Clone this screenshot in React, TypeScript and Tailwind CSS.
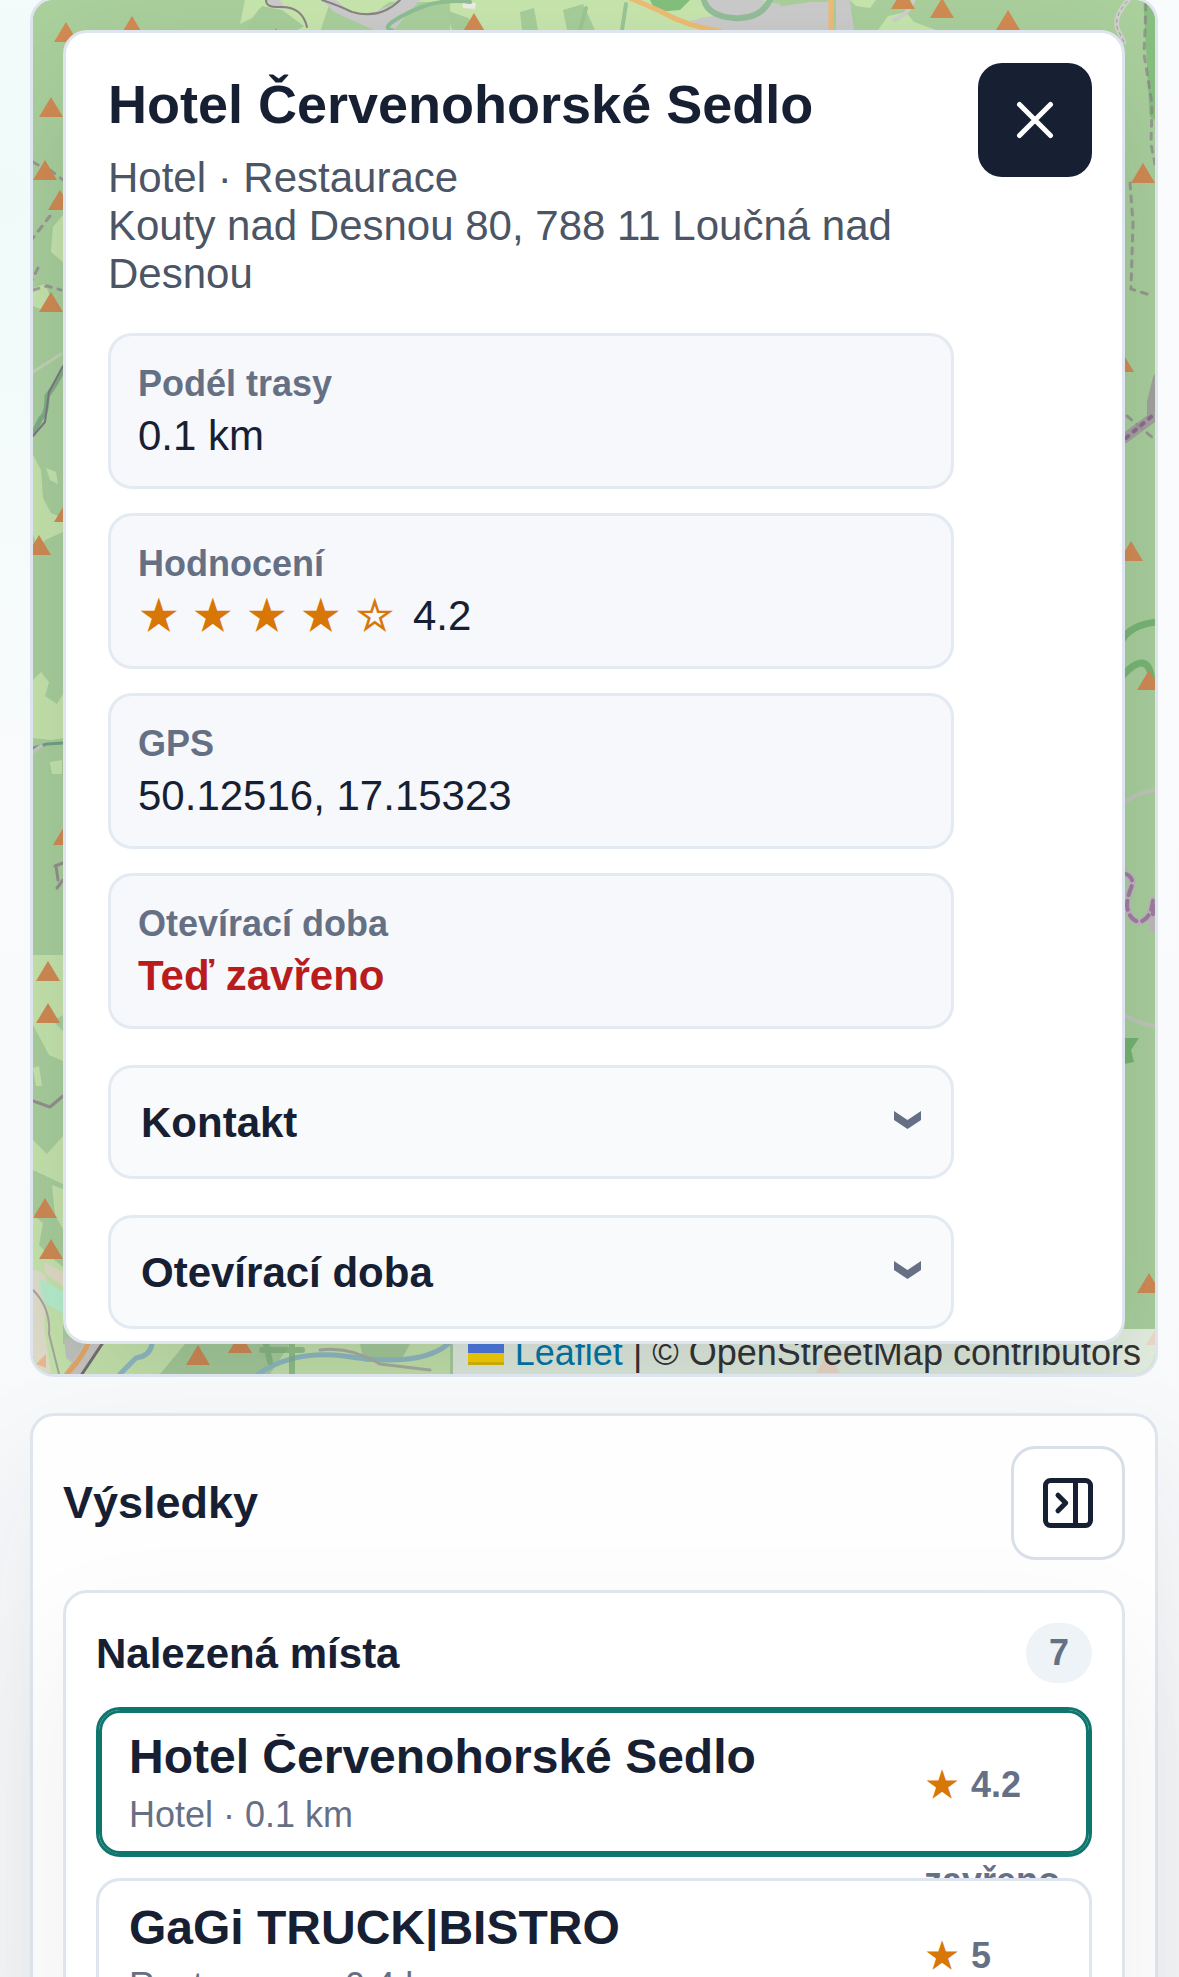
import { useState, type ReactNode } from "react";

type Place = {
  id: string;
  name: string;
  meta: string;
  rating: string;
  note?: string;
};

const PLACES: Place[] = [
  { id: "sedlo", name: "Hotel Červenohorské Sedlo", meta: "Hotel · 0.1 km", rating: "4.2", note: "zavřeno" },
  { id: "gagi", name: "GaGi TRUCK|BISTRO", meta: "Restaurace · 0.4 km", rating: "5" },
];

const STARS = ["★", "★", "★", "★", "☆"];

// peak markers, [x, base y]
const PEAKS = [
  [66, 42], [132, 36], [276, 48], [474, 33], [51, 117], [45, 180], [60, 210], [51, 312],
  [66, 522], [39, 555], [65, 845], [48, 981], [48, 1023], [45, 1218], [51, 1259],
  [198, 1365], [240, 1353], [828, 1373], [903, 9], [942, 18], [1008, 30], [1143, 183],
  [1122, 372], [1131, 561], [1149, 690], [1149, 1293], [1158, 1345],
];

export default function App() {
  const [selected, setSelected] = useState("sedlo");
  const [detailOpen, setDetailOpen] = useState(true);
  const [listOpen, setListOpen] = useState(true);

  return (
    <div className="h-screen overflow-hidden bg-[linear-gradient(180deg,#f9fcfd_0%,#f9fafc_50%,#f7f8fa_100%)] font-['Liberation_Sans',sans-serif] text-[#172033]">
      <main className="-mt-[3px] flex flex-col gap-9 bg-[radial-gradient(circle_at_0px_200px,#f0fbf9_0px,transparent_600px)] pr-[21px] pl-[30px]">
        <section className="relative overflow-hidden rounded-3xl border-3 border-[#dde4ed] bg-[#a3c595]">
          <MapTiles />
          <div className="absolute right-0 bottom-0 flex h-[45px] items-center gap-[10px] bg-white/70 pt-[2px] pr-[14px] pl-[15px] text-[36px] leading-[42px] text-[#333]">
            <a href="#leaflet" className="flex items-center gap-[11px] text-[#0078a8]">
              <svg width="36" height="24" viewBox="0 0 12 8" aria-hidden="true">
                <path fill="#4C7BE1" d="M0 0h12v4H0z" />
                <path fill="#FFD500" d="M0 4h12v3H0z" />
                <path fill="#E0BC00" d="M0 7h12v1H0z" />
              </svg>
              Leaflet
            </a>
            <span>| © OpenStreetMap contributors</span>
          </div>

          <div className="relative p-[30px]">
            {detailOpen && <PlaceDetail onClose={() => setDetailOpen(false)} />}
          </div>
        </section>

        <section className="rounded-3xl border-3 border-[#dfe5ed] bg-white/90 p-[30px] shadow-[0_54px_135px_rgba(23,32,51,0.08)]">
          <div className="mb-[30px] flex items-center justify-between">
            <h2 className="text-[45px] leading-[54px] font-bold">Výsledky</h2>
            <button
              aria-label="Skrýt výsledky"
              onClick={() => setListOpen((v) => !v)}
              className="flex size-[114px] items-center justify-center rounded-3xl border-3 border-[#d8dfe9] bg-white"
            >
              <svg width="54" height="54" viewBox="0 0 54 54" fill="none" stroke="#172033" strokeWidth="5">
                <rect x="4.500" y="4.500" width="45" height="45" rx="5" />
                <path d="M34.500 4.500v45" />
                <path d="M17 19.250l7.750 7.750-7.750 7.750" strokeLinecap="round" strokeLinejoin="round" />
              </svg>
            </button>
          </div>

          {listOpen && (
            <div className="rounded-3xl border-3 border-[#dfe5ed] bg-white p-[30px] shadow-[0_54px_135px_rgba(23,32,51,0.06)]">
              <div className="mb-6 flex items-center justify-between">
                <h3 className="pt-[2px] text-[42px] leading-[48px] font-bold">Nalezená místa</h3>
                <span className="flex h-[60px] w-[66px] items-center justify-center rounded-full bg-[#eef3f7] text-[36px] leading-[42px] font-bold text-[#667085]">
                  7
                </span>
              </div>
              <div className="flex flex-col gap-[21px]">
                {PLACES.map((place) => (
                  <PlaceRow
                    key={place.id}
                    place={place}
                    active={place.id === selected}
                    onSelect={() => setSelected(place.id)}
                  />
                ))}
              </div>
            </div>
          )}
        </section>
      </main>
    </div>
  );
}

function PlaceDetail({ onClose }: { onClose: () => void }) {
  return (
    <article className="flex items-start justify-between gap-6 rounded-3xl border-3 border-[#dfe5ee] bg-white pt-[30px] pr-[30px] pb-3 pl-[42px] shadow-[0_54px_135px_rgba(23,32,51,0.16)]">
      <div className="min-w-0 flex-1">
        <h1 className="mt-2 text-[54px] leading-[66px] font-bold">Hotel Červenohorské Sedlo</h1>
        <p className="mt-[17px] text-[42px] leading-[48px] text-[#4b5565]">
          Hotel · Restaurace
          <br />
          Kouty nad Desnou 80, 788 11 Loučná nad Desnou
        </p>
        <dl className="mt-[35px] flex flex-col gap-6">
          <Fact label="Podél trasy">0.1 km</Fact>
          <Fact label="Hodnocení">
            <span className="flex gap-[17px]">
              <span className="flex gap-3 font-bold text-[#d97706]">
                {STARS.map((star, i) => (
                  <span key={i} className="w-[42px] text-center">
                    {star}
                  </span>
                ))}
              </span>
              4.2
            </span>
          </Fact>
          <Fact label="GPS">50.12516, 17.15323</Fact>
          <Fact label="Otevírací doba">
            <strong className="text-[#b91c1c]">Teď zavřeno</strong>
          </Fact>
        </dl>
        <div className="mt-9 flex flex-col gap-9">
          <Toggle title="Kontakt" />
          <Toggle title="Otevírací doba" />
        </div>
      </div>
      <button
        aria-label="Zavřít"
        onClick={onClose}
        className="flex size-[114px] shrink-0 items-center justify-center rounded-3xl bg-[#172033]"
      >
        <svg width="54" height="54" viewBox="0 0 54 54" fill="none" stroke="#fff" strokeWidth="5" strokeLinecap="round">
          <path d="M11.500 11.500l31 31M42.500 11.500l-31 31" />
        </svg>
      </button>
    </article>
  );
}

function Fact({ label, children }: { label: string; children: ReactNode }) {
  return (
    <div className="rounded-3xl border-3 border-[#e4eaf1] bg-[#f6f8fc] p-[27px]">
      <dt className="text-[36px] leading-[42px] font-bold text-[#667085]">{label}</dt>
      <dd className="mt-[6px] h-12 text-[42px] leading-[50px]">{children}</dd>
    </div>
  );
}

function Toggle({ title }: { title: string }) {
  return (
    <button className="flex w-full items-center justify-between rounded-3xl border-3 border-[#e4eaf1] bg-[#f9fafc] px-[30px] pt-[31px] pb-[29px] text-left text-[42px] leading-[48px] font-bold">
      {title}
      <svg width="27" height="24" viewBox="0 0 27 24" fill="#667085" aria-hidden="true">
        <path d="M0 0l13.500 9L27 0v9L13.500 18 0 9z" />
      </svg>
    </button>
  );
}

function PlaceRow({ place, active, onSelect }: { place: Place; active: boolean; onSelect: () => void }) {
  return (
    <button
      onClick={onSelect}
      className={
        "relative flex h-[150px] items-start justify-between rounded-3xl border-3 bg-white px-[30px] pt-6 text-left " +
        (active ? "border-[#0f766e] shadow-[inset_0_0_0_3px_#0f766e]" : "border-[#dfe5ee]")
      }
    >
      <span className="min-w-0 flex-1">
        <span className="block truncate text-[48px] leading-[46px] font-bold">{place.name}</span>
        <span className="mt-[14px] block truncate text-[36px] leading-[42px] text-[#667085]">{place.meta}</span>
      </span>
      <span className="flex w-[135px] shrink-0 flex-col gap-12 pt-[27px] text-[36px] leading-[48px] font-bold text-[#667085]">
        <span className="flex h-12 gap-[11px]">
          <span className="w-9 text-center text-[#d97706]">★</span>
          {place.rating}
        </span>
        {place.note && <span>{place.note}</span>}
      </span>
    </button>
  );
}

function MapTiles() {
  return (
    <svg
      className="absolute inset-0 size-full"
      viewBox="33 0 1122 1374"
      preserveAspectRatio="xMidYMin slice"
      fill="none"
      strokeLinecap="round"
      strokeLinejoin="round"
      aria-hidden="true"
    >
      <rect x="33" width="1122" height="1374" fill="#abd19d" />

      {/* meadows */}
      <g fill="#c8e7ad">
        <path d="M255 0h-10l-5 24 12-6 8-10 10 0-4 22h8l4-14 12 4 8 12h22l10-30h120v30h320V0z" />
        <path d="M850 0h26l-6 8-14-2zM878 30l10-14 18-4 8 10 22 8z" />
        <path d="M63 215l-10 12-2 25 12 10zM33 288l12-4 5 12-3 16-14-6z" />
        <path d="M33 455l8 15 2 28 8 15 12 5v14l-18 8-6 12-6-18zM46 468l10 4 2 12-8-4zM33 680l8-8 8 10-4 14 12 8 6-10v44l-12 2-18-2zM50 762l12-2v14l-10 0z" />
        <path d="M33 955h30v60l-10 6 10 10v30l-14-6-16-30zM33 1068l6-2 3 20-6 0zM33 1140l14 14 16-18v48l-30-14zM52 1185l11 4v40l-8-14zM33 1215l10 8-4 22 12 12 12 10v107H33z" />
        <path d="M63 1344h135l-20 30H63zM290 1344h160v30H270z" />
      </g>
      <g fill="#a8cf9a">
        <path d="M262 6l20 4 22 16-6 4h-52zM446 10l22 8 12 12h-28zM520 12l14-4 4 22h-16zM563 10l20-6 12 26h-28zM826 10l24-4 8 14-16 12z" />
        <path d="M185 1344h90l-10 30H160zM360 1344h50l-10 18h-36z" />
      </g>
      <path d="M586 8l-6 22M626 4l-4 26" stroke="#9cc795" strokeWidth="4" />

      {/* built-up areas */}
      <g fill="#cccccc">
        <path d="M266 0h14l4 6 10 4-20-2zM322 0h16l24 14 28-8 8-6h22l-14 16-12 14h-20l-40-18zM708 0h52l20 4 2 12-30 4-44-8zM700 18l110-16 20 0 2 28H704l-12-8zM836 0h14l4 30h-18z" />
        <path d="M690 20h110v10h-96z" />
        <path d="M64 1338l24 4-14 22-8-6z" fill="#c3c6bf" />
      </g>
      <path d="M336 0h56l-16 12-24 2z" fill="#c8e7ad" />
      <path d="M462 2l14 1-1 6-12-1z" fill="#f1ece6" />
      <path d="M650 0h40l-10 10-24 2z" fill="#84c27e" />
      <path d="M704 0q4 16 30 18t36-18" stroke="#94bf98" strokeWidth="6" />
      <path d="M442 30q-12-2 10-14t40-14 28 0" stroke="#8fbf93" strokeWidth="4" transform="translate(-50 0)" />

      {/* roads and paths */}
      <path d="M266 0q0 8 14 7 22-1 27 20M322 0q18 6 30 12 28 8 48-12" stroke="#8a8482" strokeWidth="2" />
      <path d="M630-2l30 13q28 16 60 20" stroke="#efbd75" strokeWidth="5" />
      <path d="M831 0v30" stroke="#efbd75" strokeWidth="5" />
      <path d="M1132-4q-20 20-14 34l6 12" stroke="#cfd1cb" strokeWidth="5" />
      <path d="M1132-4q-20 20-14 34l6 12" stroke="#9d9c9b" strokeWidth="1" strokeDasharray="3 4" />
      <path d="M894 20q16-6 20-22" stroke="#cfd1cb" strokeWidth="4" />
      <path d="M1149 4q3 50 6 110" stroke="#7fbd7a" strokeWidth="11" opacity=".8" />
      <g stroke="#8d7888" strokeWidth="3" strokeDasharray="6 7" opacity=".6">
        <path d="M1146 4l-2 50 8 50-1 40 4 20M1130 183l3 40-2 66 16 5M33 162l14 8M50 170l13 10M50 216l-17 22M38 268l-6 12M33 290l14-4 14 4" />
        <path d="M1127 416l26 22" />
      </g>
      <path d="M55 866l8-3M56 866l2 14M63 880l-6 8M33 1101l17 6 13-11" stroke="#8d7888" strokeWidth="3" opacity=".7" />
      <path d="M63 370q-8 16-16 26 0 18-6 22l-8 16" stroke="#6ea27a" strokeWidth="5" opacity=".7" />
      <path d="M63 366l-14 26-4 30-12 14" stroke="#7d7b82" strokeWidth="2" />
      <path d="M33 372l28-18" stroke="#c4d5b5" strokeWidth="3" />
      <path d="M33 748l14-4 16-1" stroke="#72a287" strokeWidth="3" />
      <path d="M33 752l8-6" stroke="#c6cbc0" strokeWidth="4" />
      <path d="M1125 438l27-20v-16l6-24" stroke="#a3939f" strokeWidth="10" opacity=".75" />
      <path d="M1126 438l26-22" stroke="#8f6c91" strokeWidth="4" strokeDasharray="3 7" />

      {/* ring around the reserve on the right */}
      <path d="M1125 802q14-10 30-12M1125 1015q14 9 30 11" stroke="#c2c8bb" strokeWidth="4" />
      <path d="M1126 874q9 4 5 14t-4 18q2 14 12 16 12-2 14-22v28" stroke="#c0b9bd" strokeWidth="7" />
      <path d="M1126 874q9 4 5 14t-4 18q2 14 12 16 12-2 14-22v20" stroke="#a27ea2" strokeWidth="4" strokeDasharray="9 6" />
      <path d="M1122 640q10-16 36-18M1122 676q26-28 30 4" stroke="#79b874" strokeWidth="7" />
      <path d="M1124 1038h15l-8 12 3 12-10 2z" fill="#75b670" />

      {/* river valley at the bottom */}
      <path d="M33 1270q18 0 14 26t-2 38l6 40H33z" fill="#e3e0cb" />
      <path d="M44 1262l19 10v14l-18-12z" fill="#e3dec7" />
      <path d="M38 1278l26 14v22l-20-12z" fill="#b9f0cf" />
      <path d="M33 1290q18 18 16 44l10 40" stroke="#aaa7a6" strokeWidth="2" />
      <path d="M36 1364l10-10v14z" fill="#f0bd94" />
      <path d="M104 1344h-20l-20 30h20z" fill="#cbc9c5" />
      <path d="M89 1340q-4 14-22 34" stroke="#e7aa68" strokeWidth="5" />
      <path d="M102 1344l-20 30" stroke="#75726c" strokeWidth="3" />
      <path d="M152 1344q-2 12-16 14l-16 16M258 1374q36-24 86-18 76 12 104-12" stroke="#93bdc5" strokeWidth="5" />
      <path d="M320 1350q30-4 60 14l50 6" stroke="#aab2a1" strokeWidth="3" />
      <path d="M262 1350h40M292 1344v30M266 1344l4 18" stroke="#7fb57a" strokeWidth="6" opacity=".7" />

      <g fill="#d38c53">
        {PEAKS.map(([x, y]) => (
          <path key={`${x}-${y}`} d={`M${x} ${y - 20}l12 20h-24z`} />
        ))}
      </g>
    </svg>
  );
}
